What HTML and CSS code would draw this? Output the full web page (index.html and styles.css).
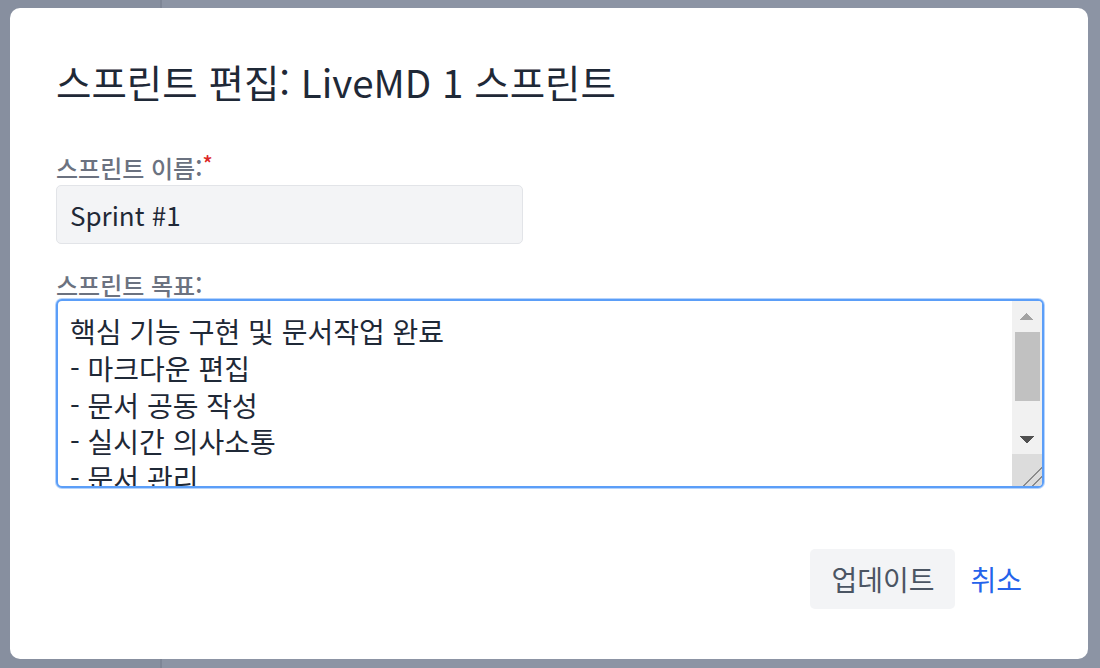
FILE: index.html
```html
<!DOCTYPE html>
<html lang="ko">
<head>
<meta charset="utf-8">
<title>스프린트 편집</title>
<link rel="stylesheet" href="styles.css">
</head>
<body>
<div class="modal">
  <h2 class="modal-title">스프린트 편집: LiveMD 1 스프린트</h2>
  <form class="form">
    <div class="field field-name">
      <label class="field-label" for="name">스프린트 이름:<span class="req">*</span></label>
      <input class="text-input" id="name" type="text" value="Sprint #1">
    </div>
    <div class="field field-goal">
      <label class="field-label" for="goal">스프린트 목표:</label>
      <div class="goal-box">
        <textarea class="text-area" id="goal">핵심 기능 구현 및 문서작업 완료
- 마크다운 편집
- 문서 공동 작성
- 실시간 의사소통
- 문서 관리
</textarea>
        <div class="scrollbar" aria-hidden="true">
          <span class="sb-btn sb-up"></span>
          <span class="sb-track"><span class="sb-thumb"></span></span>
          <span class="sb-btn sb-down"></span>
          <span class="sb-resizer"></span>
        </div>
      </div>
    </div>
    <div class="footer">
      <button type="button" class="btn btn-update">업데이트</button>
      <button type="button" class="btn btn-cancel">취소</button>
    </div>
  </form>
</div>
</body>
</html>
```
FILE: styles.css
```css
html, body {
  margin: 0;
  padding: 0;
}
body {
  width: 1100px;
  height: 668px;
  overflow: hidden;
  font-family: "Noto Sans CJK KR", "Noto Sans", sans-serif;
  background:
    linear-gradient(to right, #878f9f 0 160px, #7e8696 160px 162px, #8c94a4 162px 100%);
}
.modal {
  box-sizing: border-box;
  width: 1078px;
  margin: 8px 0 0 10px;
  padding: 49px 44px 50px 46px;
  background: #ffffff;
  border-radius: 10px;
}
.modal-title {
  margin: 0;
  font-size: 38.5px;
  line-height: 48px;
  font-weight: 400;
  color: #1f2937;
}
.form {
  display: flex;
  flex-direction: column;
}
.field {
  display: flex;
  flex-direction: column;
  align-items: flex-start;
}
.field-name {
  margin-top: 51px;
}
.field-goal {
  margin-top: 29px;
}
.field-label {
  font-size: 24px;
  line-height: 24px;
  font-weight: 500;
  color: #6b7280;
}
.req {
  color: #dc2626;
  font-size: 21px;
  line-height: 0;
  vertical-align: 6px;
}
.text-input {
  box-sizing: border-box;
  margin-top: 5px;
  width: 467px;
  height: 59px;
  padding: 0 13px;
  border: 1px solid #e2e4e8;
  border-radius: 5px;
  background: #f3f4f6;
  font-family: "Noto Sans CJK KR", "Noto Sans", sans-serif;
  font-size: 26px;
  color: #1f2937;
  outline: none;
}
.goal-box {
  box-sizing: border-box;
  margin-top: 2px;
  width: 100%;
  height: 189px;
  display: flex;
  border: 2px solid #5b9ef8;
  box-shadow: 0 0 0 1px rgba(91, 158, 248, 0.45);
  border-radius: 6px;
  background: #ffffff;
  overflow: hidden;
}
.text-area {
  flex: 1;
  min-width: 0;
  margin: 0;
  padding: 12px 12px 9px;
  border: none;
  background: transparent;
  font-family: "Noto Sans CJK KR", "Noto Sans", sans-serif;
  font-size: 28px;
  line-height: 36.75px;
  color: #1f2937;
  outline: none;
  resize: none;
  overflow: hidden;
}
.scrollbar {
  width: 30px;
  display: flex;
  flex-direction: column;
  background: #f1f1f1;
}
.sb-btn {
  display: block;
  height: 30px;
  background-repeat: no-repeat;
  background-position: center;
  background-size: 14px 7px;
}
.sb-up {
  background-image: conic-gradient(from 135deg at 50% 0%, #a3a3a3 90deg, transparent 0);
}
.sb-down {
  background-image: conic-gradient(from -45deg at 50% 100%, #505050 90deg, transparent 0);
}
.sb-track {
  flex: 1;
  display: flex;
  flex-direction: column;
}
.sb-thumb {
  display: block;
  height: 69px;
  margin: 1px 2px 0 3px;
  background: #c1c1c1;
}
.sb-resizer {
  display: block;
  height: 32px;
  background:
    linear-gradient(135deg, transparent 68%, #8a8a8a 68% 71%, transparent 71% 83%, #8a8a8a 83% 86%, transparent 86%),
    #dcdcdc;
}
.footer {
  margin-top: 61px;
  display: flex;
  justify-content: flex-end;
  align-items: center;
}
.btn {
  font-family: "Noto Sans CJK KR", "Noto Sans", sans-serif;
  font-size: 28px;
  height: 60px;
  border: none;
  border-radius: 5px;
  cursor: pointer;
}
.btn-update {
  padding: 0 21px;
  background: #f3f4f6;
  color: #4b5563;
}
.btn-cancel {
  padding: 0 22px 0 15px;
  background: transparent;
  color: #2563eb;
}
```
